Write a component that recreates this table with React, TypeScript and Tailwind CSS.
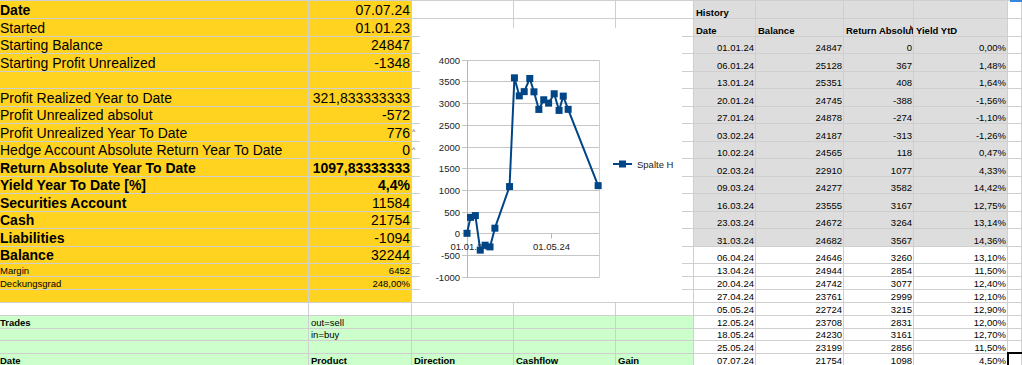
import React from "react";

const WC = [
  "w-[309px]",
  "w-[103px]",
  "w-[102px]",
  "w-[102px]",
  "w-[78px]",
  "w-[62px]",
  "w-[88px]",
  "w-[70px]",
  "w-[94px]",
  "w-[14px]",
];

const HC = [
  "h-[18px]", "h-[18px]", "h-[17px]", "h-[18px]", "h-[17px]", "h-[18px]", "h-[17px]", "h-[18px]",
  "h-[17px]", "h-[18px]", "h-[17px]", "h-[18px]", "h-[17px]", "h-[18px]", "h-[17px]", "h-[13px]",
  "h-[13px]", "h-[13px]", "h-[13px]", "h-[13px]", "h-[12px]", "h-[13px]", "h-[13px]",
];

const BIG = "text-[14px] leading-[16px]";
const SM = "text-[9.5px] leading-[11px]";

type Kind = "n" | "b" | "bb" | "s";
const left: [string, string, Kind][] = [
  ["Date", "07.07.24", "b"],
  ["Started", "01.01.23", "n"],
  ["Starting Balance", "24847", "n"],
  ["Starting Profit Unrealized", "-1348", "n"],
  ["", "", "n"],
  ["Profit Realized Year to Date", "321,833333333", "n"],
  ["Profit Unrealized absolut", "-572", "n"],
  ["Profit Unrealized Year To Date", "776", "n"],
  ["Hedge Account Absolute Return Year To Date", "0", "n"],
  ["Return Absolute Year To Date", "1097,83333333", "bb"],
  ["Yield Year To Date [%]", "4,4%", "bb"],
  ["Securities Account", "11584", "b"],
  ["Cash", "21754", "b"],
  ["Liabilities", "-1094", "b"],
  ["Balance", "32244", "b"],
  ["Margin", "6452", "s"],
  ["Deckungsgrad", "248,00%", "s"],
];

const hist: [string, string, number, string, number][] = [
  ["01.01.24", "24847", 0, "0,00%", 0],
  ["06.01.24", "25128", 367, "1,48%", 5],
  ["13.01.24", "25351", 408, "1,64%", 12],
  ["20.01.24", "24745", -388, "-1,56%", 19],
  ["27.01.24", "24878", -274, "-1,10%", 26],
  ["03.02.24", "24187", -313, "-1,26%", 33],
  ["10.02.24", "24565", 118, "0,47%", 40],
  ["02.03.24", "22910", 1077, "4,33%", 61],
  ["09.03.24", "24277", 3582, "14,42%", 68],
  ["16.03.24", "23555", 3167, "12,75%", 75],
  ["23.03.24", "24672", 3264, "13,14%", 82],
  ["31.03.24", "24682", 3567, "14,36%", 90],
  ["06.04.24", "24646", 3260, "13,10%", 96],
  ["13.04.24", "24944", 2854, "11,50%", 103],
  ["20.04.24", "24742", 3077, "12,40%", 110],
  ["27.04.24", "23761", 2999, "12,10%", 117],
  ["05.05.24", "22724", 3215, "12,90%", 125],
  ["12.05.24", "23708", 2831, "12,00%", 132],
  ["18.05.24", "24230", 3161, "12,70%", 138],
  ["25.05.24", "23199", 2856, "11,50%", 145],
  ["07.07.24", "21754", 1098, "4,50%", 188],
];

type Content = { t: string; cls: string; right: boolean };

function content(i: number, j: number): Content | null {
  if (i <= 16 && j <= 1) {
    const [a, b, k] = left[i];
    if (j === 0) {
      if (!a) return null;
      const cls = k === "s" ? SM : `${BIG} ${k === "n" ? "" : "font-bold"}`;
      return { t: a, cls, right: false };
    }
    if (!b) return null;
    const cls = k === "s" ? SM : `${BIG} ${k === "bb" ? "font-bold" : ""}`;
    return { t: b, cls, right: true };
  }
  if (i === 19 && j === 0) return { t: "Trades", cls: `${SM} font-bold`, right: false };
  if (i === 19 && j === 1) return { t: "out=sell", cls: SM, right: false };
  if (i === 20 && j === 1) return { t: "in=buy", cls: SM, right: false };
  if (i === 22 && j <= 4) {
    const h = ["Date", "Product", "Direction", "Cashflow", "Gain"][j];
    return { t: h, cls: `${SM} font-bold`, right: false };
  }
  if (j >= 5 && j <= 8) {
    if (i === 0) return j === 5 ? { t: "History", cls: `${SM} font-bold`, right: false } : null;
    if (i === 1) {
      const h = ["Date", "Balance", "Return Absolute", "Yield YtD"][j - 5];
      return { t: h, cls: `${SM} font-bold`, right: false };
    }
    const row = hist[i - 2];
    if (!row) return null;
    const v = [row[0], row[1], String(row[2]), row[3]][j - 5];
    return { t: v, cls: SM, right: true };
  }
  return null;
}

function bgFor(i: number, j: number) {
  if (i <= 17 && j <= 1) return "bg-[#ffd320]";
  if (i >= 19 && j <= 4) return "bg-[#ccffcc]";
  if (i <= 13 && j >= 5 && j <= 8) return "bg-[#dddddd]";
  return "bg-white";
}

function Chart() {
  const yOf = (v: number) => 205.3 - v * 0.0434;
  const xOf = (d: number) => 47 + d * 0.6975;
  const grid = [];
  for (let v = -1000; v <= 4000; v += 500) grid.push(v);
  const pts = hist.map((h) => [xOf(h[4]), yOf(h[2])] as [number, number]);
  const y0 = Math.round(yOf(0)) + 0.5;
  return (
    <svg width="262" height="274" viewBox="0 0 262 274">
      {grid.map((v) => {
        const y = Math.round(yOf(v)) + 0.5;
        return (
          <g key={v}>
            <line x1="42" x2="179.5" y1={y} y2={y} stroke="#c6c6c6" strokeWidth="1" />
            <text x="40" y={y + 3.5} textAnchor="end" fontSize="9.5" fill="#222">
              {v}
            </text>
          </g>
        );
      })}
      <line x1="47.5" x2="47.5" y1={Math.round(yOf(4000)) + 0.5} y2={Math.round(yOf(-1000)) + 0.5} stroke="#b8b8b8" />
      <line x1="179.5" x2="179.5" y1={Math.round(yOf(4000)) + 0.5} y2={Math.round(yOf(-1000)) + 0.5} stroke="#d0d0d0" />
      <line x1="47.5" x2="47.5" y1={y0} y2={y0 + 5} stroke="#b8b8b8" />
      <line x1="131.5" x2="131.5" y1={y0} y2={y0 + 5} stroke="#b8b8b8" />
      <text x="49" y="222" textAnchor="middle" fontSize="9.5" fill="#222">01.01.24</text>
      <text x="131.5" y="222" textAnchor="middle" fontSize="9.5" fill="#222">01.05.24</text>
      <polyline
        points={pts.map((p) => `${p[0]},${p[1]}`).join(" ")}
        fill="none"
        stroke="#004586"
        strokeWidth="2"
        strokeLinejoin="round"
      />
      {pts.map((p, k) => (
        <rect key={k} x={p[0] - 3.5} y={p[1] - 3.5} width="7" height="7" fill="#004586" />
      ))}
      <line x1="193" x2="212" y1="136" y2="136" stroke="#004586" strokeWidth="2" />
      <rect x="199" y="132.5" width="7" height="7" fill="#004586" />
      <text x="217" y="139.5" fontSize="9.5" fill="#222">Spalte H</text>
    </svg>
  );
}

export default function App() {
  return (
    <div className="relative w-[1022px] h-[365px] overflow-hidden bg-white font-['Liberation_Sans',Arial,sans-serif] text-black">
      <div className="flex flex-col border-t border-[#cfcfcf]">
        {HC.map((h, i) => (
          <div key={i} className={`flex ${h}`}>
            {WC.map((w, j) => {
              const c = content(i, j);
              const pad = j === 0 ? "pl-0" : "pl-[2px]";
              return (
                <div
                  key={j}
                  className={`flex shrink-0 items-end overflow-hidden whitespace-nowrap border-r border-b border-[#cfcfcf] ${w} ${bgFor(i, j)} ${
                    c && c.right ? "justify-end pr-px" : pad
                  }`}
                >
                  {c && <span className={c.cls}>{c.t}</span>}
                </div>
              );
            })}
          </div>
        ))}
      </div>

      {/* chart object floating over the sheet */}
      <div className="absolute left-[420px] top-[28px] w-[262px] h-[274px] bg-white">
        <Chart />
      </div>

      {/* tiny overflow carets */}
      <span className="absolute left-[412px] top-[128px] text-[7px] leading-[7px] text-[#444]">^</span>
      <span className="absolute left-[412px] top-[146px] text-[7px] leading-[7px] text-[#444]">^</span>

      {/* overflow indicator in header */}
      <div className="absolute left-[910px] top-[25px] h-0 w-0 border-y-[3px] border-l-[3px] border-y-transparent border-l-[#6b2a10]" />

      {/* cell cursor */}
      <div className="absolute left-[1007px] top-[352px] w-[30px] h-[30px] border-2 border-black" />

      {/* top right marker */}
      <div className="absolute left-[1010px] top-0 w-[12px] h-[2px] bg-[#3b86dd]" />
    </div>
  );
}
